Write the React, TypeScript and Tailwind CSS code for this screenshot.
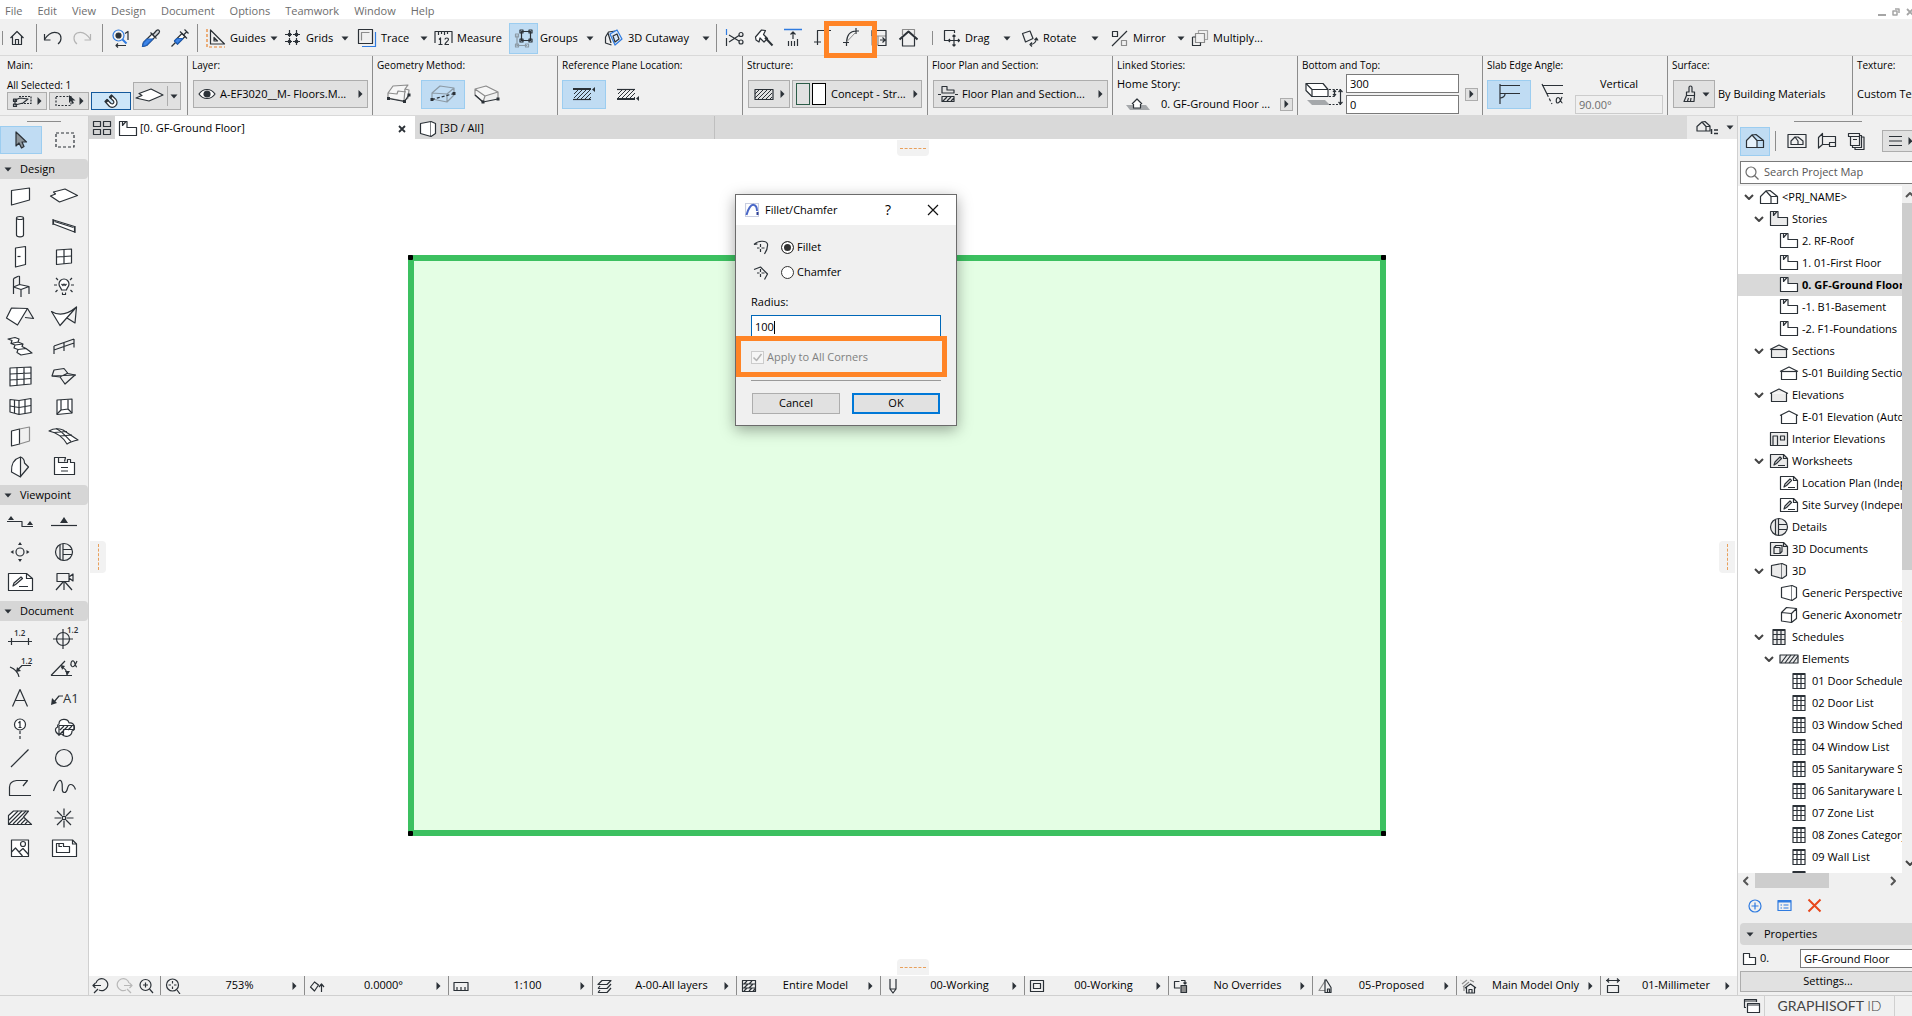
import { useState } from 'react';
import type { ReactNode } from 'react';
import clsx from 'clsx';

interface IconProps {
  w?: number;
  h?: number;
  color?: string;
  className?: string;
  children: ReactNode;
}

function Icon({ w = 20, h = 20, color = '#2b3137', className, children }: IconProps) {
  return (
    <svg
      width={w}
      height={h}
      viewBox={`0 0 ${w} ${h}`}
      fill="none"
      stroke={color}
      strokeWidth={1.2}
      strokeLinejoin="round"
      className={clsx('shrink-0', className)}
      aria-hidden="true"
    >
      {children}
    </svg>
  );
}

const Down = () => (
  <Icon w={8} h={5}>
    <path d="M.5.5h7L4 4.5z" fill="#2b3137" stroke="none" />
  </Icon>
);

const Right = () => (
  <Icon w={5} h={8}>
    <path d="M.5 0v8l4-4z" fill="#2b3137" stroke="none" />
  </Icon>
);

const Chevron = () => (
  <Icon w={10} h={7} color="#444">
    <path d="M1 1l4 4 4-4" strokeWidth={2} />
  </Icon>
);

/* ---------- shared drawings ---------- */

const StoryIcon = ({ fill = '#fff' }: { fill?: string }) => (
  <Icon w={20} h={18}>
    <path d="M1.5 1.5H9v6h9.5v8h-17z" fill={fill} />
    <path d="M4.5 1.5v4L8 1.5" />
  </Icon>
);

const HouseIcon = () => (
  <Icon w={20} h={16}>
    <path d="M1.5 14.5v-7L7 2l5 5.5v7z" fill="#fff" fillOpacity={0.6} />
    <path d="M7 2l4-.5 7.5 6v7H12M12 7.5h6.5" />
  </Icon>
);

const SectionIcon = ({ fill = '#fff', line = true }: { fill?: string; line?: boolean }) => (
  <Icon w={20} h={16}>
    <path d="M2.5 5.5v9h15v-9M1 6.500L10 2l9 4.500" fill={fill} />
    {line && <path d="M2.5 6.500h15" />}
  </Icon>
);

const SheetIcon = ({ fill = '#fff' }: { fill?: string }) => (
  <Icon w={20} h={16}>
    <path d="M1.5 1.5h13l4 4v9h-17z" fill={fill} />
    <path d="M14.5 1.5v4h4M5 12l1-3 5-5 1.5 1.5-5 5zM9 12.5h7" />
  </Icon>
);

const DetailIcon = () => (
  <Icon w={20} h={20}>
    <circle cx="10" cy="10" r="8.5" fill="#ebebeb" />
    <path d="M6.5 2.5v15M9.5 1.5v17M18 7.5H9.5M18 12.5H9.5" />
  </Icon>
);

const BoxIcon = ({ fill = '#fff' }: { fill?: string }) => (
  <Icon w={20} h={18}>
    <path d="M2.5 3.5L13 1.5v15l-10.5-3z" fill={fill} />
    <path d="M13 1.5l4.5 2v10l-4.5 3" fill={fill} />
  </Icon>
);

const AxoIcon = () => (
  <Icon w={20} h={18}>
    <path d="M2.5 6.5l5-5 10 1v10l-5 4-10-1.500zM2.5 6.5l10 1 5-5M12.5 7.5v9" fill="#fff" />
  </Icon>
);

const TableIcon = ({ fill = '#fff' }: { fill?: string }) => (
  <Icon w={14} h={18}>
    <path d="M1 1.5h12v15H1z" fill={fill} />
    <path d="M1 2h12" strokeWidth={2} />
    <path d="M1 6.5h12M1 11.5h12M5 2v14.5M9 2v14.5" />
  </Icon>
);

const HatchIcon = () => (
  <Icon w={20} h={12}>
    <path d="M1 2h18v8H1z" fill="#ebebeb" />
    <path d="M2 10l6-8M6 10l6-8M10 10l6-8M14 10l5-7" />
  </Icon>
);

const InteriorIcon = () => (
  <Icon w={20} h={16}>
    <path d="M1.5 1.5h17v13h-17z" fill="#ebebeb" />
    <path d="M4 14V5h4.5v9M11.5 5h4v4h-4z" />
  </Icon>
);

const Doc3DIcon = () => (
  <Icon w={20} h={16}>
    <path d="M1.5 1.5h13l4 4v9h-17z" fill="#ebebeb" />
    <path d="M14.5 1.5v4h4M5 6.5h6v6H5zM5 6.5l2-2h6v6l-2 2" />
  </Icon>
);

/* ---------- top toolbar ---------- */

const ToolbarBar = ({ tall = true }: { tall?: boolean }) => (
  <div className={clsx('w-px shrink-0 bg-[#8c8c8c]', tall ? 'h-7' : 'h-3.5')} />
);

interface ToolProps {
  name: string;
  width: string;
  icon: ReactNode;
  arrow?: boolean;
  showName?: boolean;
}

function Tool({ name, width, icon, arrow, showName }: ToolProps) {
  return (
    <button aria-label={name} className={clsx('flex h-8 shrink-0 items-center gap-1 text-left', width)}>
      {icon}
      {showName && <span className="whitespace-nowrap">{name}</span>}
      {arrow && (
        <span className="mr-1.5 ml-auto">
          <Down />
        </span>
      )}
    </button>
  );
}

function Toolbar() {
  return (
    <div className="flex h-[37px] shrink-0 items-center border-b border-[#d9d9d9] bg-[#f0f0f0] pt-0.5 pl-0.5 text-[11px]">
      <ToolbarBar tall={false} />
      <Tool name="Home" width="w-[33px] pl-1.5" icon={
        <Icon w={16} h={16}><path d="M1.5 8L8 1.500 14.5 8M3.5 6.5v8h9v-8M6.5 14.5v-5h3v5" /></Icon>
      } />
      <ToolbarBar />
      <Tool name="Undo" width="w-[35px] pl-1.5" icon={
        <Icon w={20} h={16}><path d="M1.5 4v6h6M1.5 9.5C5 4 10 1 15 3c4 2 4 8 0 11" /></Icon>
      } />
      <Tool name="Redo" width="w-[30px]" icon={
        <Icon w={20} h={16} color="#b4b4b4"><path d="M18.5 4v6h-6M18.5 9.5C15 4 10 1 5 3c-4 2-4 8 0 11" /></Icon>
      } />
      <ToolbarBar />
      <Tool name="Find and Select" width="w-[38px] pl-2" icon={
        <Icon w={20} h={20}>
          <circle cx="7.5" cy="7.5" r="5.5" stroke="#2f7be0" />
          <circle cx="7.5" cy="7.5" r="2.5" fill="#2b3137" />
          <path d="M11.5 11.5l4 4" stroke="#2f7be0" strokeWidth={2} />
          <path d="M14 5.500l3-2V12M5 17.5h10M7 15.500l-2 2 2 2" />
        </Icon>
      } />
      <Tool name="Pick Up Parameters" width="w-[29px]" icon={
        <Icon w={20} h={20}>
          <path d="M1.5 18.5l1-4L11 6l3 3-8.500 8.500z" fill="#fff" />
          <path d="M1.5 18.5l1-4 3.500-3.500h6L5.5 17.500z" fill="#3d85e8" stroke="#1f5fb8" />
          <path d="M9.5 4.500l6 6M12 6.500L15.500 2.500c2-1.500 4 .5 2.500 2.500l-4 4" fill="#d0d3d6" />
        </Icon>
      } />
      <Tool name="Inject Parameters" width="w-[27px]" icon={
        <Icon w={20} h={20}>
          <path d="M1.5 18.5l4-4" />
          <path d="M4.5 13l7.500-7.500 3 3L7.500 16z" fill="#fff" />
          <path d="M4.5 13l2.500-2.500h6L7.500 16z" fill="#3d85e8" stroke="#1f5fb8" />
          <path d="M10 3.500l7 7M13.5 7L17 3.500M14.500 1.500l4 4" />
        </Icon>
      } />
      <ToolbarBar />
      <Tool name="Guides" width="w-[86px] pl-2" showName arrow icon={
        <Icon w={20} h={20}>
          <path d="M1 1v18h18" stroke="#e8822c" strokeDasharray="3 2" />
          <path d="M4.5 2v14h14zM8 9.500v3.500h3.500z" />
        </Icon>
      } />
      <Tool name="Grids" width="w-[71px]" showName arrow icon={
        <Icon w={18} h={18}>
          <path d="M5.5 1v16M12.5 1v16M1 5.500h16M1 12.500h16" strokeDasharray="3 1" />
          <path d="M4.5 4.500h2v2h-2zM11.5 4.500h2v2h-2zM4.5 11.500h2v2h-2zM11.5 11.500h2v2h-2z" fill="#2b3137" />
        </Icon>
      } />
      <Tool name="Trace" width="w-[79px] pl-0.5" showName arrow icon={
        <Icon w={20} h={20}>
          <path d="M5 18.5h13.5V4" stroke="#2f7be0" />
          <path d="M1.5 1.5h14v14h-14z" />
          <path d="M4.5 12.500v-8h8" stroke="#8c8c8c" />
        </Icon>
      } />
      <Tool name="Measure" width="w-[75px]" showName icon={
        <Icon w={19} h={18}>
          <path d="M1 14V2.500h17V14M4.5 3v3M7.5 3v2M10.5 3v3M13.5 3v2" />
          <path d="M5 10.500L6.500 9v6M4.5 15.500h4M11 10.500c0-2 3.500-2 3.500 0 0 1.500-3.500 3-3.500 5h4" />
        </Icon>
      } />
      <button aria-label="Suspend Groups" className="flex h-[31px] w-[29px] shrink-0 items-center justify-center border border-[#9ccdf0] bg-[#c0dcf3]">
        <Icon w={20} h={20}>
          <path d="M3 7.500v10h10M1.5 6h3v3h-3zM1.5 16h3v3h-3zM11.5 16h3v3h-3z" stroke="#8c9aa5" />
          <path d="M7.5 3.500h9v9h-9zM6 2h3v3H6zM15 2h3v3h-3zM6 11h3v3H6zM15 11h3v3h-3z" fill="#c0dcf3" />
        </Icon>
      </button>
      <Tool name="Groups" width="w-[62px] pl-0.5" showName arrow icon={null} />
      <Tool name="3D Cutaway" width="w-[116px] pl-1" showName arrow icon={
        <Icon w={20} h={20}>
          <path d="M1.5 9l3-5 7-1M1.5 9v6l6 2M4 5l3 10" />
          <path d="M6 6l7-4 5 9-7 6z" stroke="#2f7be0" fill="#dbe9fa" />
          <path d="M9 8l4-2 2 5-4 3z" />
        </Icon>
      } />
      <ToolbarBar />
      <Tool name="Trim" width="w-[37px] pl-2" icon={
        <Icon w={20} h={20}>
          <path d="M1.5 1v6" stroke="#2f7be0" />
          <path d="M1.5 10v8" />
          <path d="M4 7l10 6M4 14l10-6.500" />
          <circle cx="16" cy="6.5" r="2" />
          <circle cx="16" cy="14" r="2" />
        </Icon>
      } />
      <Tool name="Split" width="w-[29px]" icon={
        <Icon w={20} h={20}>
          <path d="M1.5 9l6-7 4 .5-2 4 4 4-3.500 3.500-4-4-1 4-3-2z" fill="#fff" />
          <path d="M11 9.500l7.500 8" strokeWidth={2} />
        </Icon>
      } />
      <Tool name="Adjust" width="w-[29px]" icon={
        <Icon w={20} h={20}>
          <path d="M1 1.5h18" stroke="#2f7be0" strokeWidth={1.5} />
          <path d="M10 11V4M7.5 6.500L10 4l2.500 2.500M5.5 13v5M8.500 13v5M11.500 13v5M14.5 11v7" />
        </Icon>
      } />
      <Tool name="Intersect" width="w-[29px]" icon={
        <Icon w={20} h={20}><path d="M19 2.500H5.500V17M2 14h7" /></Icon>
      } />
      <Tool name="Fillet" width="relative w-[28px]" icon={
        <>
          <Icon w={20} h={20}>
            <path d="M5.5 18v-4C6 7 9 3 15 3h3M2 14.500h6M15 0v6" />
            <path d="M5.5 14L15 4" stroke="#8c8c8c" strokeWidth={1} />
          </Icon>
          <span className="absolute -top-px -left-[17px] z-10 h-[37px] w-[53px] border-5 border-[#ff8426]" />
        </>
      } />
      <Tool name="Resize" width="w-[29px]" icon={
        <Icon w={20} h={20}>
          <path d="M8 8h9M3 8h6v9H3z" stroke="#8c8c8c" />
          <path d="M3 8V2.500h14v15H9M11 12h5M13.5 9.500L16 12l-2.500 2.500" />
        </Icon>
      } />
      <Tool name="Roof" width="w-[34px]" icon={
        <Icon w={20} h={20}>
          <path d="M4.5 7V1.500h12V7" stroke="#8c8c8c" />
          <path d="M1.5 11.500l9-8 9 8" strokeWidth={2} />
          <path d="M4.5 10v8h12v-8" />
        </Icon>
      } />
      <ToolbarBar tall={false} />
      <Tool name="Drag" width="w-[84px] pl-2.5" showName arrow icon={
        <Icon w={18} h={18}>
          <path d="M5 11.500H1.500v-10h10V4" />
          <path d="M11 6v11M5.500 11.500h11M9.500 7.500L11 6l1.500 1.500M9.500 15.500L11 17l1.500-1.500M7 10l-1.500 1.500L7 13M15 10l1.500 1.500L15 13" />
        </Icon>
      } />
      <Tool name="Rotate" width="w-[88px] pl-1" showName arrow icon={
        <Icon w={18} h={18}>
          <path d="M1.5 4.500L9 2l3 7.500L4.500 13z" />
          <path d="M9 15.500c4 0 6-2 6.500-6M13.500 11l2-2 1.500 2.500M11 13.500l-2 2 2 2" />
        </Icon>
      } />
      <Tool name="Mirror" width="w-[86px] pl-1.5" showName arrow icon={
        <Icon w={18} h={18}>
          <path d="M1.5 2.500h5v5h-5zM1 17L16 2" />
          <path d="M10.5 11.500h5v5h-5z" stroke="#8c8c8c" />
        </Icon>
      } />
      <Tool name="Multiply..." width="w-[90px]" showName icon={
        <Icon w={18} h={18}>
          <path d="M7.5 1.500h9v9h-9z" stroke="#a5a5a5" />
          <path d="M4.5 4.500h9v9h-9z" stroke="#8c8c8c" fill="#f0f0f0" />
          <path d="M1.5 8v8.500h8v-3M1.5 8h3" />
        </Icon>
      } />
    </div>
  );
}

/* ---------- info box ---------- */

const boxButton = 'flex h-7 shrink-0 items-center border border-[#adadad] bg-[#e1e1e1]';
const miniButton = 'flex h-[18px] w-10 items-center border';
const pressed = 'flex h-[29px] w-11 shrink-0 items-center justify-center border border-[#9ccdf0] bg-[#c0dcf3]';
const flat = 'flex h-[29px] w-11 shrink-0 items-center justify-center';

function Section({ label, first, children }: { label: string; first?: boolean; children: ReactNode }) {
  return (
    <section
      className={clsx(
        'h-[59px] shrink-0 whitespace-nowrap',
        first ? 'w-[187px] pl-[7px]' : 'w-[185px] border-l border-[#8c8c8c] pl-1'
      )}
    >
      <h2 className="h-[18px] text-[10px] leading-[18px]">{label}</h2>
      <div className="flex h-10 items-center">{children}</div>
    </section>
  );
}

const PolygonSlab = () => (
  <Icon w={28} h={20}>
    <path d="M3 9l5-7 15-1-3 4 4 1-1 8-4 3-16-3z" stroke="#8c8c8c" fill="#f6f6f6" />
    <path d="M3 9l9 1 1-3 8 1M20 5l-1 12" stroke="#8c8c8c" />
    <path d="M3.500 14.500l16 3 4-6" />
    <path d="M2 13h3v3H2zM18 16h3v3h-3zM22.500 9.500h3v3h-3z" fill="#2b3137" stroke="none" />
  </Icon>
);

const RectSlab = () => (
  <Icon w={28} h={20}>
    <path d="M3 9l8-7 14 2-7 6zM3 9v6l15 3v-8M25 4v7l-7 7" stroke="#8c9aa5" />
    <path d="M3 15.500l22-6" strokeDasharray="3 2" />
    <path d="M1.500 14h3v3h-3zM23.500 8h3v3h-3z" fill="#2b3137" stroke="none" />
  </Icon>
);

const RotatedSlab = () => (
  <Icon w={28} h={20}>
    <path d="M2 5l11-3 12 6-13 4zM2 5v6l8 7 2-6M25 8v7" stroke="#8c8c8c" fill="#f6f6f6" />
    <path d="M2 11l8 7 15-3" />
    <path d="M8.500 16.500h3v3h-3zM23.500 13.500h3v3h-3z" fill="#2b3137" stroke="none" />
  </Icon>
);

const Hatched = ({ children }: { children?: ReactNode }) => (
  <Icon w={24} h={16}>
    <path d="M2 8l4-4M2 12l8-8M5 13l9-9M9 13l9-9M13 13l6-6M17 13l2-2" strokeWidth={1} />
    {children}
  </Icon>
);

function InfoBox() {
  return (
    <div className="flex h-[60px] shrink-0 overflow-hidden border-b border-[#d9d9d9] bg-[#f0f0f0] text-[11px]">
      <Section label="Main:" first>
        <div className="flex items-end gap-0.5">
          <div>
            <p className="h-[14px] text-[10px] leading-[14px]">All Selected: 1</p>
            <div className="flex gap-0.5">
              <button aria-label="Selection settings" className={clsx(miniButton, 'justify-between border-[#adadad] bg-[#e1e1e1] px-1')}>
                <Icon w={20} h={12}>
                  <path d="M7 1.500h12v7H8" strokeDasharray="2 1" />
                  <path d="M3 10V5l5-2 8 1-5 4zM1.500 9h3v2.500h-3zM1.500 4h3v2.500h-3z" />
                </Icon>
                <Right />
              </button>
              <button aria-label="Marquee settings" className={clsx(miniButton, 'justify-between border-[#adadad] bg-[#e1e1e1] px-1')}>
                <Icon w={22} h={12}>
                  <path d="M2 1.500h15v9H2z" strokeDasharray="2 1.5" />
                  <path d="M15 0v8l2-2 1.500 3 1.500-1-1.500-2.500h3z" fill="#2b3137" stroke="none" />
                </Icon>
                <Right />
              </button>
              <button aria-label="Magnet" className={clsx(miniButton, 'justify-center border-[#14599c] bg-[#cde6f9]')}>
                <Icon w={18} h={16}>
                  <path d="M3 8.500l2-2 4 4c2 1 3.500-.5 2.500-2.500l-4-4 2-2 4.500 4.500c3 5-2 9.500-6.500 7z" fill="#fff" />
                  <path d="M7 4.500l2.500-2.500 1.500 1.500L8.500 6zM3 8.500L5.500 6 7 7.500 4.500 10z" fill="#2b3137" stroke="none" />
                </Icon>
              </button>
            </div>
          </div>
          <button aria-label="Slab defaults" className={clsx(boxButton, 'w-12 justify-between pr-0.5')}>
            <Icon w={30} h={18}><path d="M2 11l6-2.500-3-2L17 2l12 6-14 6z" fill="#fff" /></Icon>
            <span className="h-5 w-px bg-[#adadad]" />
            <Down />
          </button>
        </div>
      </Section>
      <Section label="Layer:">
        <button className={clsx(boxButton, 'ml-px w-[175px] gap-1 px-1')}>
          <Icon w={18} h={12}>
            <path d="M1 6c4-6 12-6 16 0-4 6-12 6-16 0z" fill="#fff" />
            <circle cx="9" cy="6" r="3" fill="#2b3137" />
          </Icon>
          <span className="flex-1 text-left">A-EF3020__M- Floors.M...</span>
          <Right />
        </button>
      </Section>
      <Section label="Geometry Method:">
        <button aria-label="Polygonal" className={flat}><PolygonSlab /></button>
        <button aria-label="Rectangular" className={pressed}><RectSlab /></button>
        <button aria-label="Rotated rectangular" className={flat}><RotatedSlab /></button>
      </Section>
      <Section label="Reference Plane Location:">
        <button aria-label="Top" className={pressed}>
          <Hatched>
            <path d="M1 13.500h18" />
            <path d="M1 3h18" strokeWidth={2} />
            <path d="M23 1v5l-3-2.500z" fill="#2b3137" stroke="none" />
          </Hatched>
        </button>
        <button aria-label="Bottom" className={flat}>
          <Hatched>
            <path d="M1 3.500h18" />
            <path d="M1 13h18" strokeWidth={2} />
            <path d="M23 10v5l-3-2.500z" fill="#2b3137" stroke="none" />
          </Hatched>
        </button>
      </Section>
      <Section label="Structure:">
        <button aria-label="Structure type" className={clsx(boxButton, 'mr-0.5 ml-px w-[42px] justify-between px-1')}>
          <Hatched><path d="M2 3.500h18v10H2z" /></Hatched>
          <Right />
        </button>
        <button className={clsx(boxButton, 'w-[130px] gap-0.5 px-[3px]')}>
          <span className="h-[22px] w-[14px] border border-[#2c5c48]" />
          <span className="h-[22px] w-[14px] border border-black bg-white" />
          <span className="flex-1 pl-[3px] text-left">Concept - Str...</span>
          <Right />
        </button>
      </Section>
      <Section label="Floor Plan and Section:">
        <button className={clsx(boxButton, 'ml-px w-[175px] gap-1 px-1')}>
          <Icon w={20} h={18}>
            <path d="M4 8V1.500h5V5h7v3H4zM0 9.500h3M17 9.500h3M4 11.500h12v5H4zM5 16l4-4M9 16l4-4M13 16l3-3" />
          </Icon>
          <span className="flex-1 text-left">Floor Plan and Section...</span>
          <Right />
        </button>
      </Section>
      <Section label="Linked Stories:">
        <div className="flex-1 pr-1">
          <p className="h-5 leading-5">Home Story:</p>
          <div className="flex h-5 items-center pl-2">
            <Icon w={26} h={14}>
              <path d="M1 8h20l4 5H5z" fill="#a5a8ab" stroke="none" />
              <path d="M8.500 11V6h7v5z" fill="#fff" />
              <path d="M7 7l5-5 5 5" fill="#fff" />
            </Icon>
            <span className="flex-1 pl-2.5">0. GF-Ground Floor ...</span>
            <button aria-label="Home story" className="flex size-[13px] items-center justify-center border border-[#adadad] bg-[#e1e1e1]">
              <Right />
            </button>
          </div>
        </div>
      </Section>
      <Section label="Bottom and Top:">
        <Icon w={42} h={24} className="ml-0.5">
          <path d="M3 18h18l5 5H8z" fill="#a5a8ab" stroke="none" />
          <path d="M2 1.500h17l5 6v7H8l-6-6z" fill="#fff" />
          <path d="M2 1.500l6 6h16M8 7.500v7" />
          <path d="M25 7.500h12M25 14.500h6M25 22.500h12" strokeDasharray="2 1.5" />
          <path d="M30.500 8v6M29 10l1.500-2 1.500 2M29 12l1.500 2 1.500-2M36.500 8v14M34.500 10l2-2 2 2M34.500 20l2 2 2-2" />
        </Icon>
        <div className="mr-1.5 flex w-[113px] shrink-0 flex-col gap-0.5">
          <input aria-label="Top" defaultValue="300" className="h-[19px] w-full border border-[#7a7a7a] bg-white px-[3px]" />
          <input aria-label="Bottom" defaultValue="0" className="h-[19px] w-full border border-[#7a7a7a] bg-white px-[3px]" />
        </div>
        <button aria-label="Heights" className="flex size-[13px] shrink-0 items-center justify-center border border-[#adadad] bg-[#e1e1e1]">
          <Right />
        </button>
      </Section>
      <Section label="Slab Edge Angle:">
        <button aria-label="Perpendicular" className={pressed}>
          <Icon w={28} h={22}>
            <path d="M5 2.500h20M5 10.500h20M5 1v20" />
            <path d="M5 15c3 0 5-2 5-4" />
          </Icon>
        </button>
        <button aria-label="Custom angle" className={flat}>
          <Icon w={28} h={22}>
            <path d="M3 2.500h21M8 10.500h16M3 1l5 10" />
            <path d="M8 11l5 10" strokeDasharray="3 2" />
            <path d="M23 14c-1.500 4-3 6-4.500 6s-2-5 .5-5.500 2.500 5.500 4.500 5.500" />
          </Icon>
        </button>
        <div className="w-[88px]">
          <label htmlFor="edge-angle" className="block h-5 text-center leading-[18px]">Vertical</label>
          <input id="edge-angle" disabled defaultValue="90.00°" className="block h-[19px] w-full border border-[#cccccc] bg-[#f0f0f0] px-[3px] text-[#6d6d6d]" />
        </div>
      </Section>
      <Section label="Surface:">
        <button aria-label="Surface override" className={clsx(boxButton, 'mr-[3px] ml-px w-[42px] justify-between pr-1 pl-2')}>
          <Icon w={16} h={18}>
            <path d="M7 7V2.500a1 1 0 0 1 3 0V7h2.500v3.500h-8V7zM4.500 10.500l-2.500 6h10l.5-6M5.500 16l1-3M8.500 16l.5-3" />
          </Icon>
          <Down />
        </button>
        <span>By Building Materials</span>
      </Section>
      <Section label="Texture:">
        <span>Custom Texture</span>
      </Section>
    </div>
  );
}

/* ---------- toolbox, each drawing is centred on 14,12 ---------- */

const white = '#fff';

const designTools: [string, ReactNode][] = [
  ['Wall', <path d="M5.5 6.500l18-2.500v12l-18 5z" fill={white} />],
  ['Slab', <path d="M.5 12l5-2-2-2L15 5l12.500 6.500-18 6.500z" fill={white} />],
  ['Column', <><path d="M10.5 4v17c0 2.500 7 2.500 7 0V4" fill={white} /><ellipse cx="14" cy="4" rx="3.5" ry="1.5" /></>],
  ['Beam', <><path d="M3.5 6l21 6.500v5.500l-21-8z" fill={white} /><path d="M3 5v6M25 12v7M4.500 7.500l19 6" /></>],
  ['Door', <><path d="M9.5 4l10-1.500v18l-10 2.500z" fill={white} /><path d="M11.5 12.500h3" /></>],
  ['Window', <><path d="M6.5 6l15-1v14l-15 1.500z" fill={white} /><path d="M14 5.500v14.500M6.500 13l15-1" /></>],
  ['Object', <><path d="M7.5 20V5c0-1 6-3.500 6-2.500v8" /><path d="M7.5 13l6-2.500 9.500 2-8 3zM15 15.500V23M23 12.500V20" fill={white} /></>],
  ['Lamp', <><path d="M11.5 16c0-2-2.500-3-2.500-6a5 5 0 0 1 10 0c0 3-2.500 4-2.500 6zM12.500 18.500v2h3v-2" fill={white} /><path d="M11.5 10l1.500 1.500L14 10l1 1.500 1.500-1.500M4 11h3M21 11h3M6 4l2 2M22 4l-2 2M5.500 18l2-2M22.500 18l-2-2" /></>],
  ['Roof', <><path d="M.5 14l5-10 16 .5-10 16.500z" fill={white} /><path d="M21.5 4.500l6 10-8.500-1" /></>],
  ['Shell', <><path d="M1.5 7.500c8 5 16 3 25-4.500L10 21.500z" fill={white} /><path d="M26.5 3L25 19l-8-5" /></>],
  ['Stair', <><path d="M2 5l7-1.500 4 1.500-1 3-7 1.500 1-3zM5 9.500l4 1.500 8-1-5-2M9 11l-1 3 4 1.500 8-1-4-2 1-2.500M12 15.500l-1 3 4 2.500 11-2-6-4.500" fill={white} /></>],
  ['Railing', <path d="M4 12v8M14 8.500V17M24 5v8.500M4 12l20-7M4 16l20-7" />],
  ['Curtain Wall', <><path d="M4 4l21-1v17L4 22z" fill={white} /><path d="M11 3.500v18M18 3.500v17.500M4 10l21-1M4 16l21-1.500" /></>],
  ['Morph', <><path d="M4 6l10-1.500 4 5 7 1.500-10 9-5-7-8-1z" /><path d="M2 12l24-1M10 13l8-4" /></>],
  ['Skylight', <><path d="M4 5.500l9 1v14L4 18zM13 6.500l12-2v14l-12 2" fill={white} /><path d="M8.500 6v13M19 5.500v14M4 12l9 1.500 12-2" /></>],
  ['Opening', <><path d="M7 6l15-1v14L7 20.500z" fill={white} /><path d="M11 6v10l-4 4M18 5.500V15l4 4M11 16l7-1" /></>],
  ['Zone', <><path d="M5.5 7l8-2v15l-8 2z" fill={white} /><path d="M13.5 5l10-2v14l-10 3" stroke="#8c8c8c" /></>],
  ['Mesh', <><path d="M-1 7c5-3 9-3 14-1l15 10c-5 1-8 2-11 4C13 13 8 9-1 7z" fill={white} /><path d="M6 4.500c5 2 9 7 15 13M4 8.500l13-1M10 12l12-1" /></>],
  ['Complex', <><path d="M5.5 18C5 10 8 5 14.500 3v20z" fill={white} /><path d="M14.5 3c3 1 4 4 4 6l4 4-8 9.500" /></>],
  ['Plan', <><path d="M4.5 3.500h4v5h9v-3h3v3h4v12h-20z" fill={white} /><path d="M8.5 3.500h7l-1 4M11 13.500h7M11 17h7" /></>],
];

const viewTools: [string, ReactNode][] = [
  ['Section', <><path d="M1 11.500h15v5h11" /><path d="M2 10l3-4 3 4zM21 15l3-4 3 4z" fill="#2b3137" stroke="none" /></>],
  ['Elevation', <><path d="M1 15.500h26" /><path d="M10 13l4-6 4 6z" fill="#2b3137" stroke="none" /></>],
  ['Interior Elevation', <><circle cx="14" cy="12" r="4" /><path d="M12 5l2-3 2 3zM12 19l2 3 2-3zM7.500 10l-3 2 3 2zM20.500 10l3 2-3 2z" fill="#2b3137" stroke="none" /></>],
  ['Detail', <><circle cx="14" cy="12" r="8.5" /><path d="M10 4.500v15M13 3.500v17M22 9.500h-9M22 14.500h-9" /></>],
  ['Worksheet', <><path d="M2.5 3.500h18l6 5v12h-24z" fill={white} /><path d="M20.5 3.500v5h6M7 16l1-3 7-6 1.500 1.500-7 6zM13 16.500h9" /></>],
  ['Camera', <><path d="M7 3.500h12v8H7zM19 7l4-3v7l-4-3M13 12l-7 8M15 12l7 8M14 12v8" /></>],
];

const docTools: [string, ReactNode][] = [
  ['Dimension', <><path d="M2 15.500h24M5.500 12v7M22.500 12v7" /><text x="8" y="10" fontSize="8" fontWeight="600" fill="#2b3137" stroke="none">1.2</text></>],
  ['Level Dimension', <><circle cx="13" cy="13" r="6.5" /><path d="M3 13h20M13 3v20" /><text x="17" y="7" fontSize="8" fontWeight="600" fill="#2b3137" stroke="none">1.2</text></>],
  ['Radial Dimension', <><path d="M4 11c5 2 8 5 9 10M25 9.500h-9l-5 5" /><path d="M10 16l1-5 4 4z" fill="#2b3137" stroke="none" /><text x="15" y="8" fontSize="8" fontWeight="600" fill="#2b3137" stroke="none">1.2</text></>],
  ['Angle Dimension', <><path d="M1 19.500h21M1 19.500L15 5M11 11c4 1 6 4 6 8" /><path d="M15 15h5l-2.500 4zM11 9l4 1-3 4z" fill="#2b3137" stroke="none" /><path d="M27 5c-2 5-4 7-5.500 5s0-6 2-5 1.500 6 3.500 6" /></>],
  ['Text', <path d="M6.500 20.500l7.500-17 7.500 17M9 14.500h10" />],
  ['Label', <><path d="M4 16l5-6h4" /><path d="M1 19l1-7 5 5z" fill="#2b3137" stroke="none" /><text x="13" y="17" fontSize="13" fill="#2b3137" stroke="none">A1</text></>],
  ['Grid Element', <><circle cx="14" cy="8.5" r="5.5" fill={white} /><path d="M14 15v8" strokeDasharray="3 2" /><path d="M12.5 7L14 5.500v6M12.500 11.500h3" /></>],
  ['Change', <><path d="M9 8c0-6 9-6 10-1 6-1 7 7 3 8 0 6-8 7-10 3-6 2-9-6-4-7-1-1 0-3 1-3z" fill={white} /><path d="M9 20V9.500h15v4H13.500V20M10 14l4-4M14 14l4-4M18 14l4-4M10 18l3-3" /></>],
  ['Line', <path d="M5 21L22.500 3.500" />],
  ['Circle', <circle cx="14" cy="12" r="8.5" />],
  ['Polyline', <path d="M25 19.500H3.500V11c0-4 3-6 7-6.500h11L17 10" />],
  ['Spline', <path d="M3.5 15C6 8 9 2 11.500 5.500c2 4-1 11 3 11s2-8 6-8c3 0 4 2 5 5" />],
  ['Fill', <><path d="M2.5 18.500v-9l5-4.500h15l-5 6 8 7.500z" fill={white} /><path d="M3 14l9-9M3 18L16 5M7 18L20 5M11 18l6.500-6.500M15 18l4.500-4.500M19 18l2.500-2.500" /></>],
  ['Hotspot', <><path d="M14 2.500v7M14 14.500v7M4.500 12h7M16.500 12h7M7 5l5 5M16 14l5 5M21 5l-5 5M12 14l-5 5" /><path d="M12.5 10.500h3v3h-3z" /></>],
  ['Figure', <><path d="M5.5 4h17v16.500h-17z" fill={white} /><circle cx="17" cy="8" r="2.5" /><path d="M5.5 16l4-4 7 8M13 16l4-3.500 5.500 6" /></>],
  ['Drawing', <><path d="M2.5 4h20l4 4v12.500h-24z" fill={white} /><path d="M6.5 7.500h7v3h6v6h-13zM9 7.500v3h3M22.500 4v4h4" /></>],
];

function ToolGroup({ title, tools }: { title: string; tools: [string, ReactNode][] }) {
  return (
    <section>
      <h2 className="flex h-5 items-center gap-2 rounded-r-sm bg-[#d6d6d6] pl-1 text-[11px]">
        <Down />
        {title}
      </h2>
      <div className="grid grid-cols-[40px_48px] pt-0.5 pb-1">
        {tools.map(([name, art]) => (
          <button key={name} aria-label={name} className="flex h-[30px] items-center justify-center">
            <Icon w={28} h={24} className="overflow-visible">{art}</Icon>
          </button>
        ))}
      </div>
    </section>
  );
}

function Toolbox() {
  return (
    <aside className="w-[89px] shrink-0 border-r border-[#d0d0d0] bg-[#f0f0f0]">
      <div className="mx-auto mt-[5px] h-px w-[34px] bg-[#8c8c8c]" />
      <div className="mt-1 mb-[5px] flex h-7">
        <button aria-label="Arrow" className="flex w-[42px] items-center justify-center border border-[#9ccdf0] bg-[#c0dcf3]">
          <Icon w={14} h={18}><path d="M2 1v14l3-3 2.500 5 2.500-1.500-2-4.500h4.500z" fill="#8c949a" /></Icon>
        </button>
        <button aria-label="Marquee" className="flex w-[45px] items-center justify-center">
          <Icon w={20} h={16}><path d="M1 1h18v14H1z" strokeDasharray="3 2" /></Icon>
        </button>
      </div>
      <ToolGroup title="Design" tools={designTools} />
      <ToolGroup title="Viewpoint" tools={viewTools} />
      <ToolGroup title="Document" tools={docTools} />
    </aside>
  );
}

/* ---------- drawing area ---------- */

function Tabs() {
  return (
    <div className="flex h-[23px] shrink-0 items-stretch bg-[#d9d9d9] text-[11px]">
      <button aria-label="Tab overview" className="flex w-[26px] items-center justify-center bg-[#d4d4d4]">
        <Icon w={20} h={16}><path d="M1.5 1.500h7v5h-7zM11.500 1.500h7v5h-7zM1.5 9.500h7v5h-7zM11.500 9.500h7v5h-7z" /></Icon>
      </button>
      <div className="flex w-[300px] items-center gap-0.5 bg-white pt-0.5 pr-[9px] pl-[3px]">
        <StoryIcon />
        <span className="flex-1">[0. GF-Ground Floor]</span>
        <button aria-label="Close tab">
          <Icon w={8} h={8}><path d="M1 1l6 6M7 1L1 7" strokeWidth={1.8} /></Icon>
        </button>
      </div>
      <div className="flex w-[300px] items-center gap-0.5 border-r border-[#bfbfbf] pt-0.5 pl-[3px]">
        <BoxIcon />
        <span>[3D / All]</span>
      </div>
      <button aria-label="Quick options" className="ml-auto flex w-[50px] items-center justify-between bg-[#ebebeb] pr-[3px] pl-2">
        <Icon w={24} h={16}>
          <path d="M2 11V6.500L7 2l4 4.500V11zM7 2l3-.5 5 4.500v5h-4M11 6.500h4" />
          <path d="M16.5 9v5M19 10h4M19 13.500h4" strokeWidth={1.5} />
        </Icon>
        <Down />
      </button>
    </div>
  );
}

function FilletDialog() {
  const [mode, setMode] = useState('fillet');
  const radio =
    'size-[13px] appearance-none rounded-full border border-[#333] bg-white checked:bg-[#333] checked:shadow-[inset_0_0_0_2px_white]';
  return (
    <div
      role="dialog"
      aria-labelledby="dialog-title"
      className="absolute top-[55px] left-[646px] w-[222px] border border-[#6b6b6b] bg-[#f0f0f0] text-[11px] shadow-[0_4px_14px_rgba(0,0,0,0.35)]"
    >
      <header className="flex h-[30px] items-center bg-white pl-[9px]">
        <Icon w={14} h={14}>
          <path d="M.5.5h13v13H.5z" stroke="#c8cde0" />
          <path d="M1.5 12C3 6 6 1 9 2c2 .5 3 3 3 6" stroke="#4a68c8" strokeWidth={2} />
          <path d="M12.5 9v3" stroke="#2c3f94" strokeWidth={2} />
        </Icon>
        <h1 id="dialog-title" className="flex-1 pl-1.5">Fillet/Chamfer</h1>
        <button aria-label="Help" className="w-11 text-sm">?</button>
        <button aria-label="Close" className="flex w-[46px] items-center justify-center">
          <Icon w={12} h={12} color="#111"><path d="M1 1l10 10M11 1L1 11" /></Icon>
        </button>
      </header>
      <div className="px-[15px] pt-2.5 pb-[11px]">
        <label className="flex h-[25px] items-center gap-[3px]">
          <Icon w={18} h={16} className="mr-[7px] ml-0.5">
            <path d="M1 4.500C5 .5 13 0 14.500 4c.5 4-1 7-3 10M1 4.500l3.500-.5M7.500 4v3M7.500 9v3M4 8h2.500M8.500 8h3" />
          </Icon>
          <input type="radio" name="mode" checked={mode === 'fillet'} onChange={() => setMode('fillet')} className={radio} />
          Fillet
        </label>
        <label className="flex h-[25px] items-center gap-[3px]">
          <Icon w={18} h={16} className="mr-[7px] ml-0.5">
            <path d="M1 4.500L7.500 2l7 7-3 5.500M7.500 4v3M7.500 9v3M4 8h2.500M8.500 8h3" />
          </Icon>
          <input type="radio" name="mode" checked={mode === 'chamfer'} onChange={() => setMode('chamfer')} className={radio} />
          Chamfer
        </label>
        <label htmlFor="radius" className="mt-2 block h-5 leading-[18px]">Radius:</label>
        <div className="mt-0.5 flex h-6 items-center border border-[#0067b8] bg-white pl-[3px]">
          <input id="radius" defaultValue="100" className="field-sizing-content outline-none" />
          <span className="h-[13px] w-px bg-black" />
        </div>
        <div className="relative flex h-9 items-center text-[#808080]">
          <div className="grid place-items-center">
            <input id="all-corners" type="checkbox" defaultChecked disabled className="col-start-1 row-start-1 size-[13px] appearance-none border border-[#cccccc] bg-[#f6f6f6]" />
            <Icon w={11} h={9} color="#b4b4b4" className="col-start-1 row-start-1">
              <path d="M1.5 4.500l3 3L9.500 1" strokeWidth={1.5} />
            </Icon>
          </div>
          <label htmlFor="all-corners" className="pl-[3px]">Apply to All Corners</label>
          <span className="absolute -top-[3px] -right-1.5 -bottom-0.5 -left-[15px] border-5 border-[#ff8426]" />
        </div>
        <hr className="mt-[5px] border-[#9a9a9a]" />
        <div className="mt-3 flex justify-between px-px">
          <button className="h-[21px] w-[88px] border border-[#adadad] bg-[#e1e1e1]">Cancel</button>
          <button className="h-[21px] w-[88px] border-2 border-[#0078d7] bg-[#e1e1e1]">OK</button>
        </div>
      </div>
    </div>
  );
}

const corner = 'absolute size-[5px] rounded-[1px] bg-black';
const tag = 'absolute flex items-center justify-center bg-[#f2f2f2]';
const dashX = 'w-[26px] border-t border-dashed border-[#e8a05c]';
const dashY = 'h-[26px] border-l border-dashed border-[#e8a05c]';

function Canvas() {
  return (
    <div className="relative min-h-0 flex-1 overflow-hidden bg-white">
      <div className={clsx(tag, 'top-px left-[808px] h-4 w-8 rounded-b-sm')}><span className={dashX} /></div>
      <div className={clsx(tag, 'bottom-px left-[808px] h-4 w-8 rounded-t-sm')}><span className={dashX} /></div>
      <div className={clsx(tag, 'top-[402px] left-px h-8 w-4 rounded-r-sm')}><span className={dashY} /></div>
      <div className={clsx(tag, 'top-[402px] right-0.5 h-8 w-4 rounded-l-sm')}><span className={dashY} /></div>

      {/* Selected slab */}
      <div className="absolute top-[116px] right-[351px] bottom-[140px] left-[319px] border-6 border-[#3cc060] bg-[#e4fee4]">
        <span className={clsx(corner, '-top-1.5 -left-1.5')} />
        <span className={clsx(corner, '-top-1.5 -right-1.5')} />
        <span className={clsx(corner, '-bottom-1.5 -left-1.5')} />
        <span className={clsx(corner, '-right-1.5 -bottom-1.5')} />
      </div>

      <FilletDialog />
    </div>
  );
}

/* ---------- quick options ---------- */

const quickOptions: [string, ReactNode][] = [
  ['753%', <><circle cx="7.5" cy="7" r="6" /><path d="M12 12l3 4M7.5 3v2.500M7.5 8.500V11M3.500 7H6M9 7h2.500" /></>],
  ['0.0000°', <><path d="M1.5 9l4-5 4 3-4 6zM12.500 14V7M10 9l2.500-3L15 9" /></>],
  ['1:100', <path d="M1 4.500h14v8H1zM4 9v3M8 9v3M12 9v3" />],
  ['A-00-All layers', <path d="M1 6.500l4-4h9l-4 4zM1 10.500L3 8M1 10.500h9l4-4.500M1 14.500L3 12M1 14.500h9l4-4.500" />],
  ['Entire Model', <path d="M1.5 2.500h13v11h-13zM1.5 6h13M1.5 10h13M3 6l3-3M8 6l3-3M3 10l4-4M8 10l4-4M3 13l3-3M8 13l3-3M12 13l2-2" />],
  ['00-Working', <path d="M5 1v10l3 4 3-4V1M5 11h6" />],
  ['00-Working', <path d="M1.5 2.500h13v11h-13zM4.500 5.500h7v5h-7z" />],
  ['No Overrides', <><path d="M7 10H1.500V3.500h5M8 2.500h4v3M10.500 4.500l1.500 1.500 1.500-1.500" /><path d="M8 7.500h5.500v7H8z" fill="#8c8c8c" /></>],
  ['05-Proposed', <><path d="M9 1.500L2 12.500h6" stroke="#8c8c8c" /><path d="M9 1.500l5 8v5H8v-13M10.500 14v-3h2v3" /></>],
  ['Main Model Only', <><path d="M1 6l5-4M2 9l6-5M3 8v5M9 2l4 2" stroke="#8c8c8c" /><path d="M4 10l5.500-4 5.500 4M5.500 9v6h8V9M8 15v-3.500h3V15" /></>],
  ['01-Millimeter', <path d="M1 2.500h14M4 .5l-2 2 2 2M12 .5l2 2-2 2M2.500 7.500h11v7h-11z" />],
];

function QuickOptions() {
  return (
    <div className="flex h-[19px] shrink-0 bg-[#f0f0f0] text-[11px]">
      <div className="flex w-[71px] shrink-0 items-center gap-[5px] pl-[3px]">
        <button aria-label="Previous zoom">
          <Icon w={18} h={16}><path d="M6 11l-4 4M4 5a6 6 0 1 1 3 7M1 7.500h8M3.500 5L1 7.500 3.500 10" /></Icon>
        </button>
        <button aria-label="Next zoom">
          <Icon w={18} h={16} color="#b8b8b8"><path d="M12 11l4 4M14 5a6 6 0 1 0-3 7M17 7.500H9M14.500 5L17 7.500 14.500 10" /></Icon>
        </button>
        <button aria-label="Zoom in">
          <Icon w={16} h={16}><circle cx="7.5" cy="7" r="5.5" /><path d="M11.5 11l3.500 4M5 7h5M7.500 4.500v5" /></Icon>
        </button>
      </div>
      {quickOptions.map(([label, art], i) => (
        <button key={i} className="flex w-36 items-center border-l border-[#8c8c8c] last:min-w-0 last:flex-1">
          <span className="flex w-6 shrink-0 justify-center"><Icon w={16} h={16}>{art}</Icon></span>
          <span className="flex-1 pl-0.5 whitespace-nowrap">{label}</span>
          <span className="w-3 shrink-0"><Right /></span>
        </button>
      ))}
    </div>
  );
}

/* ---------- navigator ---------- */

interface TreeRow {
  level: number;
  label: string;
  icon: ReactNode;
  open?: boolean;
  active?: boolean;
}

const tree: TreeRow[] = [
  { level: 0, label: '<PRJ_NAME>', icon: <HouseIcon />, open: true },
  { level: 1, label: 'Stories', icon: <StoryIcon fill="#ebebeb" />, open: true },
  { level: 2, label: '2. RF-Roof', icon: <StoryIcon /> },
  { level: 2, label: '1. 01-First Floor', icon: <StoryIcon /> },
  { level: 2, label: '0. GF-Ground Floor', icon: <StoryIcon />, active: true },
  { level: 2, label: '-1. B1-Basement', icon: <StoryIcon /> },
  { level: 2, label: '-2. F1-Foundations', icon: <StoryIcon /> },
  { level: 1, label: 'Sections', icon: <SectionIcon fill="#ebebeb" />, open: true },
  { level: 2, label: 'S-01 Building Section', icon: <SectionIcon /> },
  { level: 1, label: 'Elevations', icon: <SectionIcon fill="#ebebeb" line={false} />, open: true },
  { level: 2, label: 'E-01 Elevation (Auto)', icon: <SectionIcon line={false} /> },
  { level: 1, label: 'Interior Elevations', icon: <InteriorIcon /> },
  { level: 1, label: 'Worksheets', icon: <SheetIcon fill="#ebebeb" />, open: true },
  { level: 2, label: 'Location Plan (Independent)', icon: <SheetIcon /> },
  { level: 2, label: 'Site Survey (Independent)', icon: <SheetIcon /> },
  { level: 1, label: 'Details', icon: <DetailIcon /> },
  { level: 1, label: '3D Documents', icon: <Doc3DIcon /> },
  { level: 1, label: '3D', icon: <BoxIcon fill="#ebebeb" />, open: true },
  { level: 2, label: 'Generic Perspective', icon: <BoxIcon /> },
  { level: 2, label: 'Generic Axonometry', icon: <AxoIcon /> },
  { level: 1, label: 'Schedules', icon: <TableIcon fill="#ebebeb" />, open: true },
  { level: 2, label: 'Elements', icon: <HatchIcon />, open: true },
  { level: 3, label: '01 Door Schedule', icon: <TableIcon /> },
  { level: 3, label: '02 Door List', icon: <TableIcon /> },
  { level: 3, label: '03 Window Schedule', icon: <TableIcon /> },
  { level: 3, label: '04 Window List', icon: <TableIcon /> },
  { level: 3, label: '05 Sanitaryware Schedule', icon: <TableIcon /> },
  { level: 3, label: '06 Sanitaryware List', icon: <TableIcon /> },
  { level: 3, label: '07 Zone List', icon: <TableIcon /> },
  { level: 3, label: '08 Zones Category', icon: <TableIcon /> },
  { level: 3, label: '09 Wall List', icon: <TableIcon /> },
  { level: 3, label: '', icon: <TableIcon /> },
];

const indents = ['pl-1.5', 'pl-4', 'pl-[26px]', 'pl-9'];

function Navigator() {
  return (
    <aside className="flex w-[175px] shrink-0 flex-col overflow-hidden border-l border-[#d0d0d0] bg-[#f0f0f0] text-[11px]">
      <div className="mt-[5px] ml-14 h-px w-[68px] shrink-0 bg-[#8c8c8c]" />
      <div className="mt-1 flex h-[30px] shrink-0 items-center pl-0.5">
        <button aria-label="Project Map" className="flex h-[29px] w-[30px] shrink-0 items-center justify-center border border-[#9ccdf0] bg-[#c0dcf3]">
          <HouseIcon />
        </button>
        <span className="mr-[11px] ml-[5px] h-5 w-px shrink-0 bg-[#8c8c8c]" />
        <button aria-label="View Map" className="w-[30px] shrink-0">
          <Icon w={20} h={18}>
            <path d="M1 2.500h18v13H1z" />
            <path d="M4 12.500V9l4-4 3 4v3.500zM8 5h3l5 4v3.500h-5" />
          </Icon>
        </button>
        <button aria-label="Layout Book" className="w-[30px] shrink-0">
          <Icon w={20} h={18}>
            <path d="M1.5 5.500l4-4v11l-4 3.500zM5.500 4.500h13v10h-6v-4h6M5.500 12.500h7" />
          </Icon>
        </button>
        <button aria-label="Publisher Sets" className="w-[35px] shrink-0">
          <Icon w={20} h={18}>
            <path d="M1.5 1.500h11v3h-11zM3.500 4.500v9h9v-10M12.500 3.500h2v12h-9v-2M14.500 5h2.500v12.500H8v-2M6 7.500h4" />
          </Icon>
        </button>
        <button aria-label="Navigator settings" className="flex h-[22px] w-10 shrink-0 items-center gap-1.5 border border-[#adadad] bg-[#e1e1e1] pl-1.5">
          <Icon w={13} h={12}><path d="M0 1.500h13M0 6h13M0 10.500h13" /></Icon>
          <Right />
        </button>
      </div>
      <div className="mt-[5px] ml-0.5 flex h-[23px] w-48 shrink-0 items-center gap-[5px] border border-[#7a7a7a] bg-white pl-1">
        <Icon w={14} h={14} color="#6d6d6d"><circle cx="6" cy="6" r="5" /><path d="M9.5 9.500l4 4" /></Icon>
        <input aria-label="Search" placeholder="Search Project Map" className="min-w-0 flex-1 outline-none placeholder:text-[#555]" />
      </div>

      <div className="mt-0.5 flex min-h-0 flex-1">
        <ul className="min-w-0 flex-1 overflow-hidden bg-white">
          {tree.map((row, i) => (
            <li
              key={i}
              className={clsx(
                'flex h-[22px] items-center whitespace-nowrap',
                indents[row.level],
                row.active && 'bg-[#d9d9d9] font-bold'
              )}
            >
              <span className="flex w-3.5 shrink-0 items-center">{row.open && <Chevron />}</span>
              <span className="mr-0.5 flex w-[22px] shrink-0 items-center justify-center">{row.icon}</span>
              {row.label}
            </li>
          ))}
        </ul>
        <div className="flex w-2.5 shrink-0 flex-col overflow-hidden bg-[#f0f0f0]">
          <span className="flex h-[17px] w-4 items-center justify-center">
            <Icon w={10} h={7} color="#555"><path d="M1 6l4-4 4 4" strokeWidth={2} /></Icon>
          </span>
          <span className="h-[367px] bg-[#cdcdcd]" />
          <span className="mt-auto flex h-5 w-4 items-center justify-center"><Chevron /></span>
        </div>
      </div>
      <div className="flex h-[15px] shrink-0 items-center pr-[15px] pl-[5px]">
        <Icon w={7} h={10} color="#555"><path d="M5 1L1 5l4 4" strokeWidth={2} /></Icon>
        <span className="ml-[5px] h-[15px] w-[74px] bg-[#cdcdcd]" />
        <Icon w={7} h={10} color="#555" className="ml-auto"><path d="M1 1l4 4-4 4" strokeWidth={2} /></Icon>
      </div>
      <div className="flex h-[35px] shrink-0 items-center gap-[15px] pl-2.5">
        <button aria-label="Add">
          <Icon w={14} h={14} color="#2f7be0"><circle cx="7" cy="7" r="6" /><path d="M3.5 7h7M7 3.500v7" /></Icon>
        </button>
        <button aria-label="Item settings">
          <Icon w={15} h={13} color="#2f7be0"><path d="M1 1.500h13v10H1z" /><path d="M1 2.500h13" strokeWidth={2} /><path d="M3.5 6H5M6.500 6h5M3.500 9H5M6.500 9h5" /></Icon>
        </button>
        <button aria-label="Delete">
          <Icon w={15} h={15} color="#e8471c"><path d="M1.5 1.500l12 12M13.500 1.500l-12 12" strokeWidth={2} /></Icon>
        </button>
      </div>
      <h2 className="ml-0.5 flex h-[22px] shrink-0 items-center gap-2.5 rounded-l-sm bg-[#d6d6d6] pl-1.5">
        <Down />
        Properties
      </h2>
      <div className="mt-1 flex h-[19px] shrink-0 items-center pl-1">
        <Icon w={16} h={14}><path d="M1.5 1.500h6v4h6v7h-12z" fill="#fff" /></Icon>
        <label htmlFor="story-name" className="w-[42px] shrink-0 pl-0.5">0.</label>
        <input id="story-name" defaultValue="GF-Ground Floor" className="h-[19px] w-32 shrink-0 border border-[#7a7a7a] bg-white px-[3px]" />
      </div>
      <button className="mt-[3px] mb-[3px] ml-0.5 h-[21px] w-44 shrink-0 border border-[#adadad] bg-[#e1e1e1]">Settings...</button>
    </aside>
  );
}

const menus = ['File', 'Edit', 'View', 'Design', 'Document', 'Options', 'Teamwork', 'Window', 'Help'];

export default function App() {
  return (
    <div className="flex h-screen flex-col overflow-hidden bg-white font-['Open_Sans','Noto_Sans',sans-serif] text-black">
      <nav className="flex h-[19px] shrink-0 items-center gap-[15px] bg-white pt-1 pl-[5px] text-[11px] text-[#6d6d6d]">
        {menus.map((menu) => (
          <button key={menu}>{menu}</button>
        ))}
        <div className="ml-auto flex items-center gap-1.5">
          <Icon w={8} h={8} color="#a5a5a5"><path d="M0 7h8" strokeWidth={2} /></Icon>
          <Icon w={8} h={8} color="#a5a5a5"><path d="M1 3h4v4H1zM3 1h4v4" strokeWidth={1.5} /></Icon>
          <Icon w={6} h={8} color="#a5a5a5"><path d="M1 1l6 6M7 1L1 7" strokeWidth={1.8} /></Icon>
        </div>
      </nav>
      <Toolbar />
      <InfoBox />
      <main className="flex min-h-0 flex-1">
        <Toolbox />
        <div className="flex min-w-0 flex-1 flex-col">
          <Tabs />
          <Canvas />
          <QuickOptions />
        </div>
        <Navigator />
      </main>
      <footer className="flex h-[21px] shrink-0 items-center justify-end border-t border-[#d0d0d0] bg-[#f0f0f0]">
        <Icon w={20} h={16} className="mr-0.5"><path d="M4 9.500H2.500v-8h12V4M2.500 3h12" /><path d="M5.5 5.500h12v9h-12zM5.500 7h12" fill="#fff" /></Icon>
        <div className="flex h-full w-[131px] items-center justify-center border-x border-[#d0d0d0] font-['Lato',sans-serif] text-sm text-[#444]">
          GRAPHISOFT&nbsp;<span className="font-light">ID</span>
        </div>
        <div className="w-[17px]" />
      </footer>
    </div>
  );
}
